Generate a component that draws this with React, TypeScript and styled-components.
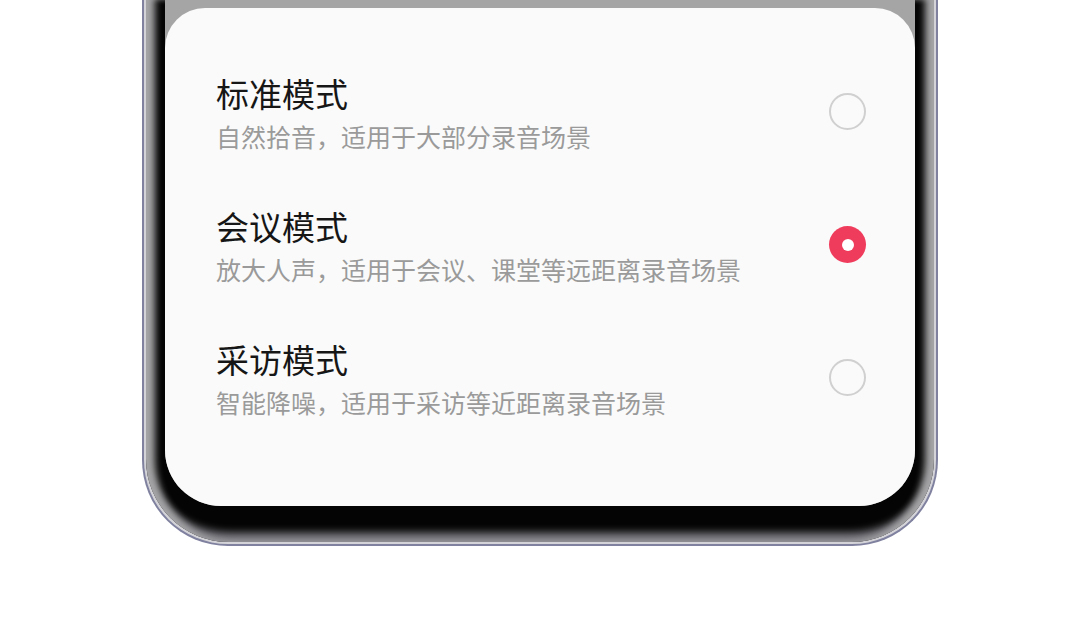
import styled, { createGlobalStyle } from 'styled-components';

const GlobalStyle = createGlobalStyle`
    html, body {
        margin: 0;
        padding: 0;
        background: #ffffff;
    }
    body {
        font-family: "Noto Sans CJK SC", "Noto Sans", sans-serif;
    }
`;

const Page = styled.div`
    width: 1080px;
    height: 644px;
    padding-left: 142px;
    box-sizing: border-box;
    overflow: hidden;
`;

const Rim = styled.div`
    width: 796px;
    height: 546px;
    box-sizing: border-box;
    border: 2px solid #7f819f;
    border-top: none;
    border-radius: 0 0 86px 86px;
    background: #d3d3d8;
    padding: 0 2px 2px;
`;

const Frame = styled.div`
    height: 100%;
    box-sizing: border-box;
    padding: 0 19px 36px;
    border-radius: 0 0 83px 83px;
    background: #040404;
    box-shadow:
        inset 12px 0 7px -3px #a4a4a6,
        inset -12px 0 7px -3px #a4a4a6,
        inset 0 -12px 8px -3px #85858c;
`;

const Screen = styled.div`
    height: 100%;
    box-sizing: border-box;
    padding-top: 8px;
    border-radius: 0 0 56px 56px;
    background: #a5a5a5;
    overflow: hidden;
    display: flex;
    flex-direction: column;
`;

const Sheet = styled.div`
    flex: 1;
    background: #fafafa;
    border-radius: 40px 40px 0 0;
    padding: 38px 49px 0 51px;
`;

const Option = styled.div`
    display: flex;
    align-items: center;
    justify-content: space-between;
    padding: 25px 0;
`;

const Texts = styled.div`
    display: flex;
    flex-direction: column;
`;

const Title = styled.div`
    font-size: 33px;
    line-height: 44px;
    color: #161616;
    margin-bottom: 3px;
`;

const Subtitle = styled.div`
    font-size: 25px;
    line-height: 36px;
    color: #9a9a9a;
`;

const Radio = styled.div<{ $checked?: boolean }>`
    width: 37px;
    height: 37px;
    box-sizing: border-box;
    border-radius: 50%;
    margin-top: -2px;
    display: flex;
    align-items: center;
    justify-content: center;
    border: ${p => (p.$checked ? 'none' : '2px solid #d0d0d0')};
    background: ${p => (p.$checked ? '#f03c5c' : 'transparent')};

    &::after {
        content: '';
        display: ${p => (p.$checked ? 'block' : 'none')};
        width: 12px;
        height: 12px;
        border-radius: 50%;
        background: #ffffff;
    }
`;

const modes = [
    { title: '标准模式', desc: '自然拾音，适用于大部分录音场景' },
    { title: '会议模式', desc: '放大人声，适用于会议、课堂等远距离录音场景' },
    { title: '采访模式', desc: '智能降噪，适用于采访等近距离录音场景' },
];

export default function App() {
    const selected = 1;

    return (
        <>
            <GlobalStyle />
            <Page>
                <Rim>
                    <Frame>
                        <Screen>
                            <Sheet>
                                {modes.map((m, i) => (
                                    <Option key={m.title}>
                                        <Texts>
                                            <Title>{m.title}</Title>
                                            <Subtitle>{m.desc}</Subtitle>
                                        </Texts>
                                        <Radio $checked={i === selected} />
                                    </Option>
                                ))}
                            </Sheet>
                        </Screen>
                    </Frame>
                </Rim>
            </Page>
        </>
    );
}
